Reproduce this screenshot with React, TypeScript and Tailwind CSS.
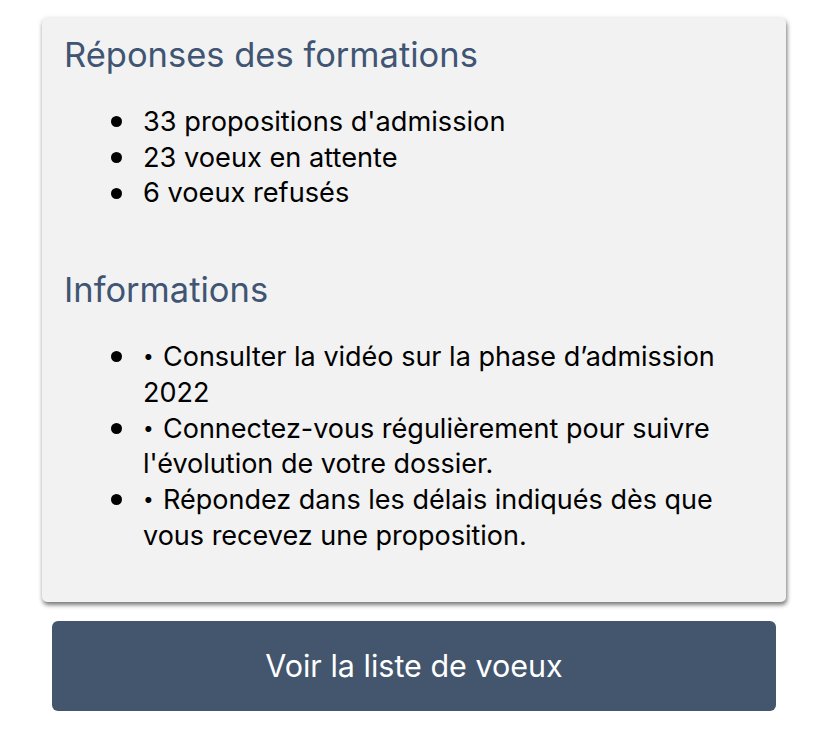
import React from "react";

const font = { fontFamily: "Inter, 'Noto Sans', sans-serif" };

function Bullet() {
  return (
    <span className="flex h-[35.7px] w-[79px] shrink-0 items-center pl-[47px]">
      <span className="block h-[11px] w-[11px] rounded-full bg-black" />
    </span>
  );
}

function Item({ children }: { children: React.ReactNode }) {
  return (
    <li className="flex">
      <Bullet />
      <span className="whitespace-nowrap">{children}</span>
    </li>
  );
}

function Dot() {
  return <span className="relative -top-[3px] inline-block w-[20px] text-[19px] leading-[0]">•</span>;
}

export default function App() {
  return (
    <div className="min-h-[743px] w-[827px] bg-white pt-[18px]" style={font}>
      <div className="ml-[42px] w-[744px] rounded-[5px] bg-[#f2f2f2] pb-[49px] pl-[22px] pt-[17px] shadow-[1px_3px_4px_rgba(0,0,0,0.5),0_0_6px_rgba(0,0,0,0.08)]">
        <h2 className="text-[34.5px] leading-[40px] text-[#3f5573]">Réponses des formations</h2>
        <ul className="mt-[29px] text-[27.2px] leading-[35.7px] text-black">
          <Item>33 propositions d'admission</Item>
          <Item>23 voeux en attente</Item>
          <Item>6 voeux refusés</Item>
        </ul>
        <h2 className="mt-[59px] text-[34.5px] leading-[40px] text-[#3f5573]">Informations</h2>
        <ul className="mt-[29px] text-[27px] leading-[35.7px] text-black">
          <Item>
            <Dot />Consulter la vidéo sur la phase d’admission
            <br />
            2022
          </Item>
          <Item>
            <Dot />Connectez-vous régulièrement pour suivre
            <br />
            l'évolution de votre dossier.
          </Item>
          <Item>
            <Dot />Répondez dans les délais indiqués dès que
            <br />
            vous recevez une proposition.
          </Item>
        </ul>
      </div>
      <button className="ml-[52px] mt-[19px] flex h-[90px] w-[724px] items-center justify-center rounded-[6px] bg-[#43566e] text-[30.5px] text-white">
        Voir la liste de voeux
      </button>
    </div>
  );
}
